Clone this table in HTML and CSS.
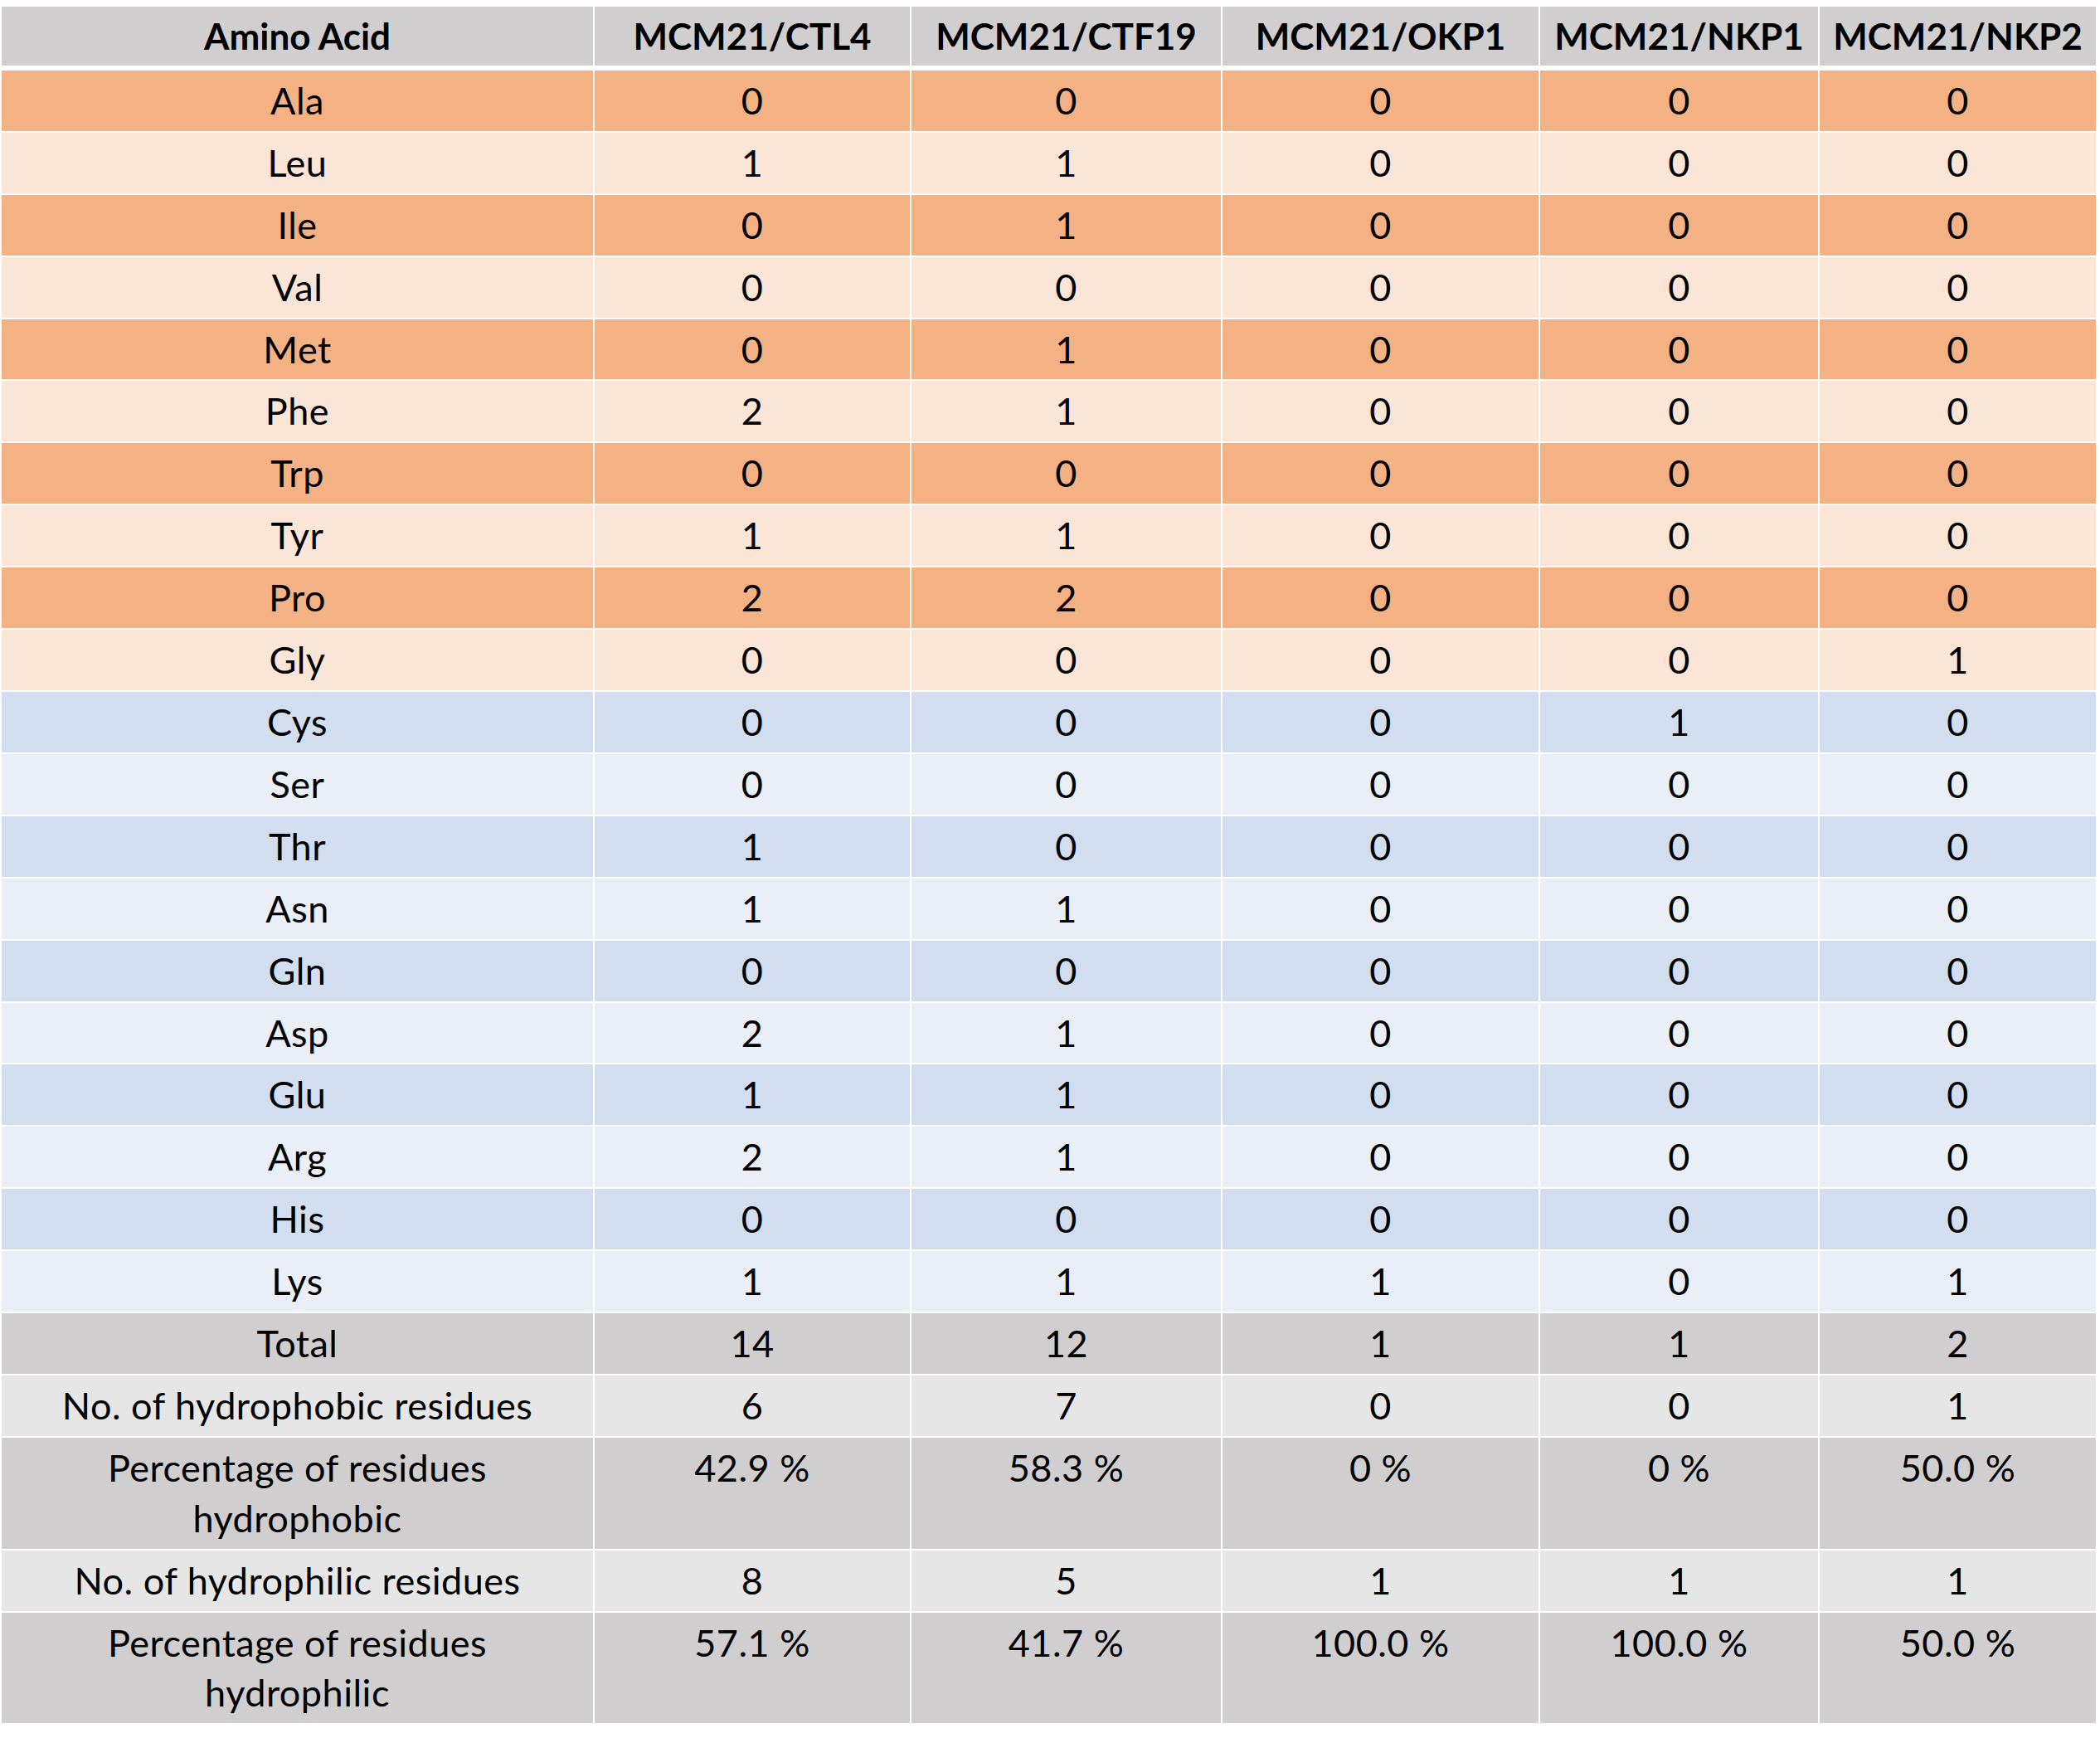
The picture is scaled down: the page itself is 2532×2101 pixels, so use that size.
FILE: index.html
```html
<!DOCTYPE html>
<html lang="en">
<head>
<meta charset="utf-8">
<title>MCM21 amino acid composition</title>
<link rel="stylesheet" href="styles.css">
</head>
<body>
<div class="page">
<table class="aa-table">
  <colgroup>
    <col class="c1"><col class="c2"><col class="c3"><col class="c4"><col class="c5"><col class="c6">
  </colgroup>
  <thead>
    <tr class="head">
      <th>Amino Acid</th><th>MCM21/CTL4</th><th>MCM21/CTF19</th><th>MCM21/OKP1</th><th>MCM21/NKP1</th><th>MCM21/NKP2</th>
    </tr>
  </thead>
  <tbody>
    <tr class="or-d"><td>Ala</td><td>0</td><td>0</td><td>0</td><td>0</td><td>0</td></tr>
    <tr class="or-l"><td>Leu</td><td>1</td><td>1</td><td>0</td><td>0</td><td>0</td></tr>
    <tr class="or-d"><td>Ile</td><td>0</td><td>1</td><td>0</td><td>0</td><td>0</td></tr>
    <tr class="or-l"><td>Val</td><td>0</td><td>0</td><td>0</td><td>0</td><td>0</td></tr>
    <tr class="or-d"><td>Met</td><td>0</td><td>1</td><td>0</td><td>0</td><td>0</td></tr>
    <tr class="or-l"><td>Phe</td><td>2</td><td>1</td><td>0</td><td>0</td><td>0</td></tr>
    <tr class="or-d"><td>Trp</td><td>0</td><td>0</td><td>0</td><td>0</td><td>0</td></tr>
    <tr class="or-l"><td>Tyr</td><td>1</td><td>1</td><td>0</td><td>0</td><td>0</td></tr>
    <tr class="or-d"><td>Pro</td><td>2</td><td>2</td><td>0</td><td>0</td><td>0</td></tr>
    <tr class="or-l"><td>Gly</td><td>0</td><td>0</td><td>0</td><td>0</td><td>1</td></tr>
    <tr class="bl-d"><td>Cys</td><td>0</td><td>0</td><td>0</td><td>1</td><td>0</td></tr>
    <tr class="bl-l"><td>Ser</td><td>0</td><td>0</td><td>0</td><td>0</td><td>0</td></tr>
    <tr class="bl-d"><td>Thr</td><td>1</td><td>0</td><td>0</td><td>0</td><td>0</td></tr>
    <tr class="bl-l"><td>Asn</td><td>1</td><td>1</td><td>0</td><td>0</td><td>0</td></tr>
    <tr class="bl-d"><td>Gln</td><td>0</td><td>0</td><td>0</td><td>0</td><td>0</td></tr>
    <tr class="bl-l"><td>Asp</td><td>2</td><td>1</td><td>0</td><td>0</td><td>0</td></tr>
    <tr class="bl-d"><td>Glu</td><td>1</td><td>1</td><td>0</td><td>0</td><td>0</td></tr>
    <tr class="bl-l"><td>Arg</td><td>2</td><td>1</td><td>0</td><td>0</td><td>0</td></tr>
    <tr class="bl-d"><td>His</td><td>0</td><td>0</td><td>0</td><td>0</td><td>0</td></tr>
    <tr class="bl-l"><td>Lys</td><td>1</td><td>1</td><td>1</td><td>0</td><td>1</td></tr>
    <tr class="gr-d"><td>Total</td><td>14</td><td>12</td><td>1</td><td>1</td><td>2</td></tr>
    <tr class="gr-l"><td>No. of hydrophobic residues</td><td>6</td><td>7</td><td>0</td><td>0</td><td>1</td></tr>
    <tr class="gr-d"><td>Percentage of residues<br>hydrophobic</td><td>42.9 %</td><td>58.3 %</td><td>0 %</td><td>0 %</td><td>50.0 %</td></tr>
    <tr class="gr-l"><td>No. of hydrophilic residues</td><td>8</td><td>5</td><td>1</td><td>1</td><td>1</td></tr>
    <tr class="gr-d"><td>Percentage of residues<br>hydrophilic</td><td>57.1 %</td><td>41.7 %</td><td>100.0 %</td><td>100.0 %</td><td>50.0 %</td></tr>
  </tbody>
</table>
</div>
</body>
</html>
```

FILE: styles.css
```css
html, body {
  margin: 0;
  padding: 0;
  background: #ffffff;
}

.page {
  padding: 8px 0 0 2px;
}

.aa-table {
  border-collapse: separate;
  border-spacing: 0;
  table-layout: fixed;
  width: 2525px;
  font-family: "Lato", "Liberation Sans", sans-serif;
  font-size: 45px;
  letter-spacing: 0.5px;
  color: #000000;
}

.c1 { width: 715px; }
.c2 { width: 382px; }
.c3 { width: 375px; }
.c4 { width: 383px; }
.c5 { width: 337px; }
.c6 { width: 333px; }

.aa-table th,
.aa-table td {
  padding: 6px 0;
  line-height: 60.9px;
  text-align: center;
  vertical-align: top;
  border-right: 2px solid #ffffff;
  border-bottom: 2px solid #ffffff;
  white-space: nowrap;
}

.aa-table th:last-child,
.aa-table td:last-child {
  border-right: 0;
}

.head th {
  font-size: 44px;
  letter-spacing: 0;
  font-weight: 700;
  background: #d0cece;
  padding: 5px 0 5px;
  border-bottom-width: 6px;
}

.or-d td { background: #f4b183; }
.or-l td { background: #fbe5d6; }
.bl-d td { background: #d2deef; }
.bl-l td { background: #e9eef7; }
.gr-d td { background: #d0cece; }
.gr-l td { background: #e7e6e6; }
```
